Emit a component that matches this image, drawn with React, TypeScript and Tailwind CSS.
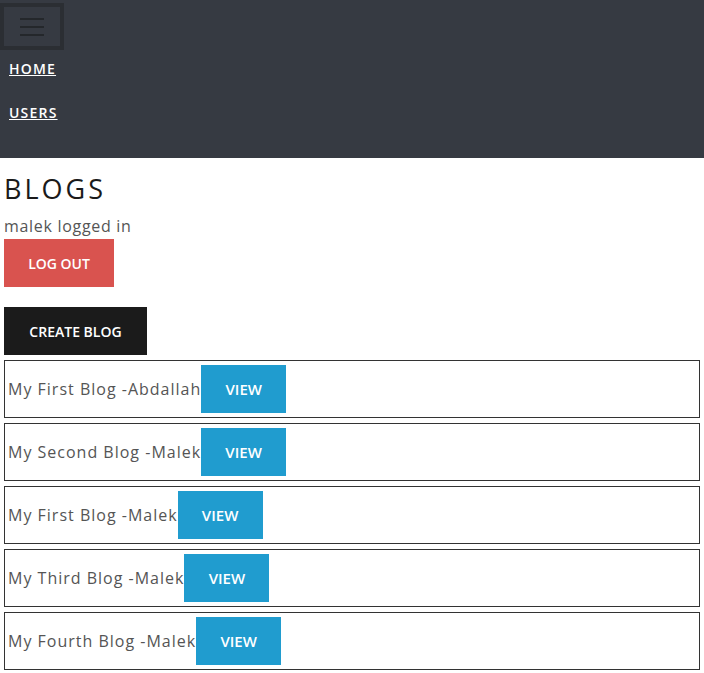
import { useState } from "react";

export default function App() {
  const blogs = [
    { title: "My First Blog", author: "Abdallah" },
    { title: "My Second Blog", author: "Malek" },
    { title: "My First Blog", author: "Malek" },
    { title: "My Third Blog", author: "Malek" },
    { title: "My Fourth Blog", author: "Malek" },
  ];

  const [open, setOpen] = useState(true);

  return (
    <div className="min-h-screen bg-white font-['Open_Sans',sans-serif]">
      <nav className="bg-[#363a42] h-[158px] pt-[3px]">
        <button
          className="w-16 h-[47px] border-4 border-[#2b2e33] flex flex-col items-center justify-center gap-[6px]"
          onClick={() => setOpen(!open)}
        >
          <span className="block w-6 h-[2px] bg-[#24272b]" />
          <span className="block w-6 h-[2px] bg-[#24272b]" />
          <span className="block w-6 h-[2px] bg-[#24272b]" />
        </button>
        {open && (
          <div className="flex flex-col pl-[9px] pt-[9px] gap-[24px]">
            <a href="#" className="text-white text-[14px] font-semibold underline tracking-[1.2px] leading-[20px]">
              HOME
            </a>
            <a href="#" className="text-white text-[14px] font-semibold underline tracking-[1.2px] leading-[20px]">
              USERS
            </a>
          </div>
        )}
      </nav>
      <div className="px-1">
        <h2 className="text-[27px] tracking-[3px] text-[#1a1a1a] mt-[13px] leading-[36px]">BLOGS</h2>
        <p className="text-[16px] text-[#555] tracking-[0.7px] leading-[22px] mt-[8px]">malek logged in</p>
        <button className="bg-[#d9534f] text-white font-semibold text-[14px] w-[110px] h-12 mt-[2px]">LOG OUT</button>
        <div className="mt-5">
          <button className="bg-[#1b1b1b] text-white font-semibold text-[14px] w-[143px] h-12">CREATE BLOG</button>
        </div>
        <div className="flex flex-col gap-[5px] mt-[5px]">
          {blogs.map((b, idx) => (
            <div key={b.title + idx} className="border border-[#333] h-[58px] flex items-center pl-[3px]">
              <span className="text-[16px] text-[#555] tracking-[1px]">
                {b.title} -{b.author}
              </span>
              <button className="bg-[#209ccf] text-white font-semibold text-[15px] w-[85px] h-12">VIEW</button>
            </div>
          ))}
        </div>
      </div>
    </div>
  );
}
